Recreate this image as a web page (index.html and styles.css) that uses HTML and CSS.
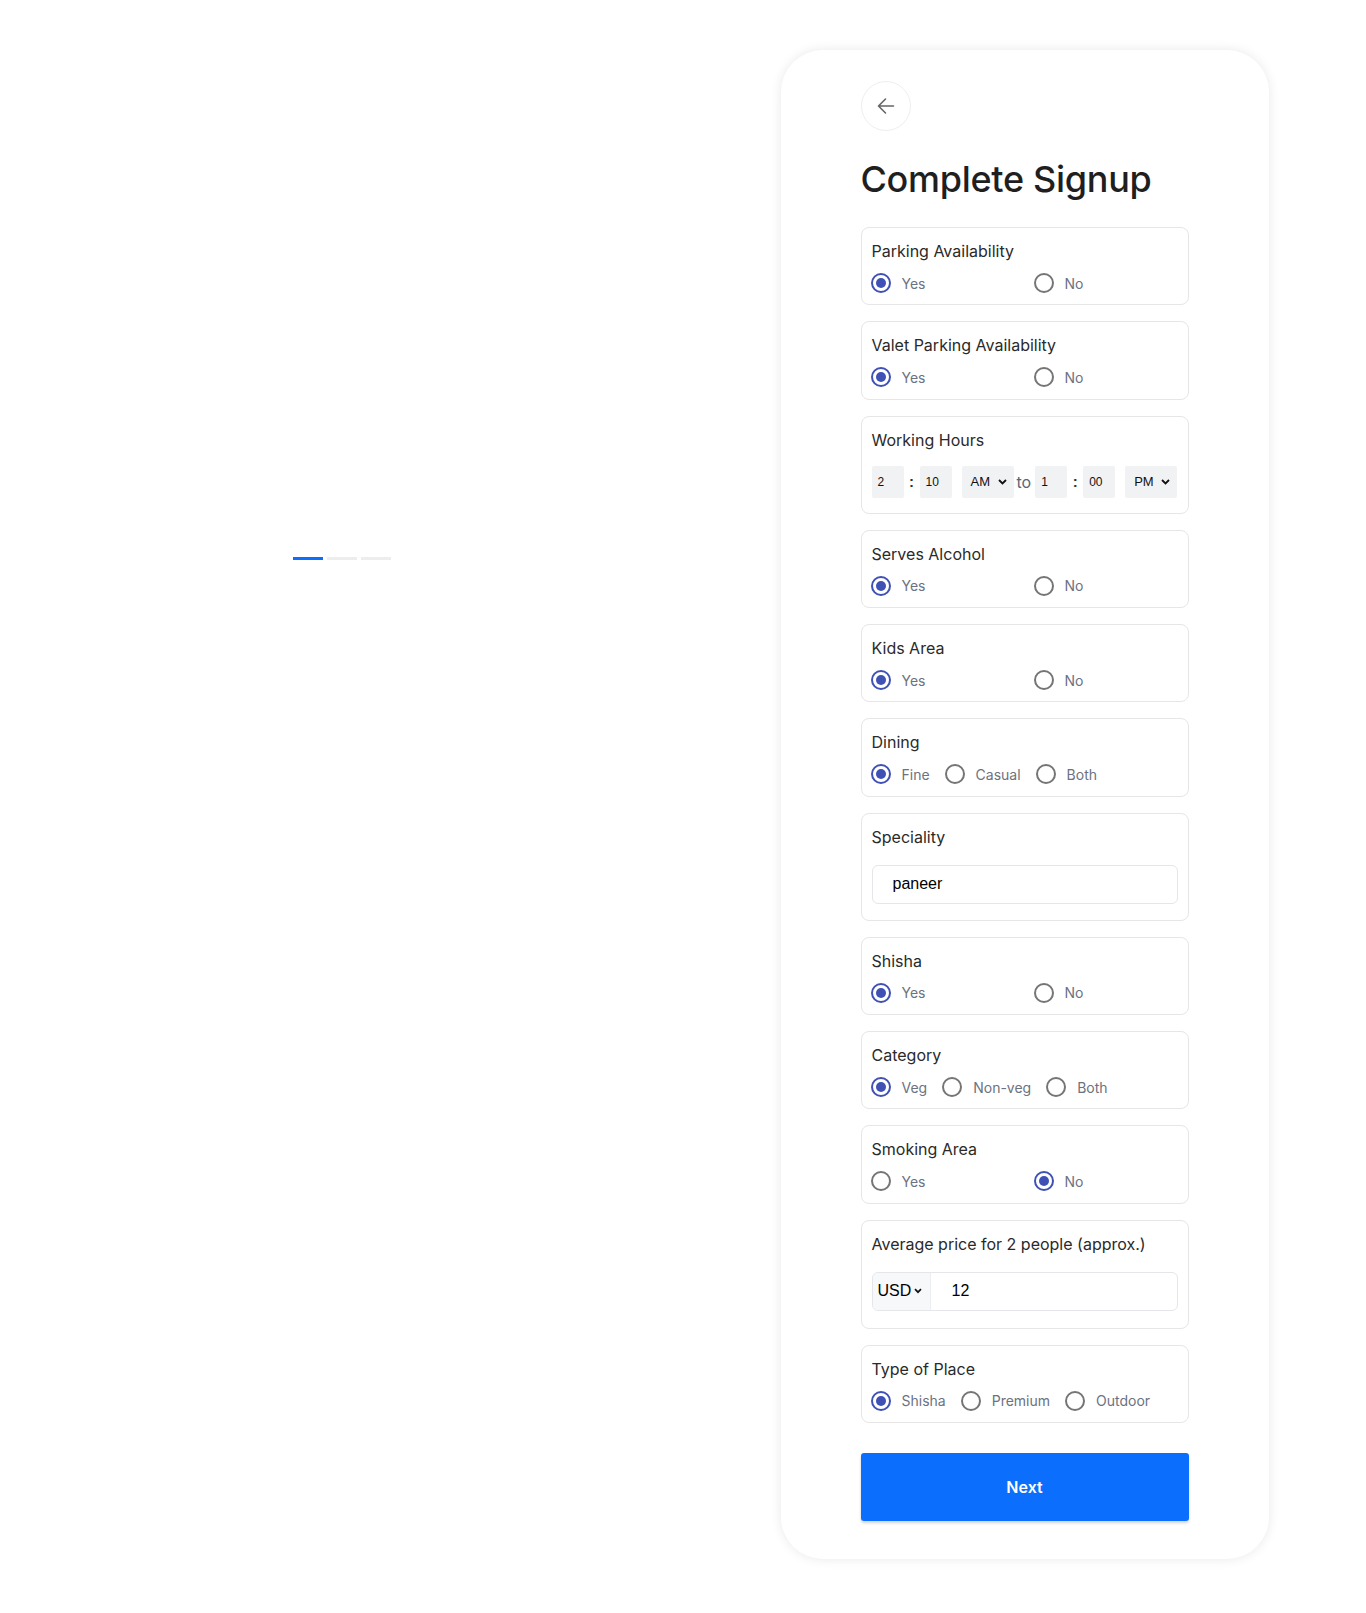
FILE: index.html
```html
<!DOCTYPE html>
<html lang="en">
<head>
<meta charset="utf-8">
<title>Complete Signup</title>
<link rel="stylesheet" href="styles.css">
</head>
<body>
<div class="page">
  <div class="left">
    <div class="indicators">
      <span class="ind active"></span><span class="ind"></span><span class="ind"></span>
    </div>
  </div>
  <div class="right">
    <div class="card">
      <button class="back" type="button" aria-label="Back">
        <svg width="20" height="20" viewBox="0 0 20 20" fill="none" stroke="#666" stroke-width="1.6" stroke-linecap="round" stroke-linejoin="round"><path d="M17.5 10H2.5M9.5 3 2.5 10l7 7"/></svg>
      </button>
      <h1 class="title">Complete Signup</h1>

      <div class="box">
        <div class="label">Parking Availability</div>
        <div class="opts two">
          <span class="opt"><span class="radio on"></span>Yes</span>
          <span class="opt"><span class="radio"></span>No</span>
        </div>
      </div>

      <div class="box">
        <div class="label">Valet Parking Availability</div>
        <div class="opts two">
          <span class="opt"><span class="radio on"></span>Yes</span>
          <span class="opt"><span class="radio"></span>No</span>
        </div>
      </div>

      <div class="box">
        <div class="label">Working Hours</div>
        <div class="hours">
          <span class="tin">2</span><span class="colon">:</span><span class="tin">10</span>
          <span class="tsel">AM<svg width="9" height="6" viewBox="0 0 9 6"><path d="M1 1l3.5 3.5L8 1" fill="none" stroke="#111" stroke-width="1.8"/></svg></span>
          <span class="to">to</span>
          <span class="tin">1</span><span class="colon">:</span><span class="tin">00</span>
          <span class="tsel">PM<svg width="9" height="6" viewBox="0 0 9 6"><path d="M1 1l3.5 3.5L8 1" fill="none" stroke="#111" stroke-width="1.8"/></svg></span>
        </div>
      </div>

      <div class="box">
        <div class="label">Serves Alcohol</div>
        <div class="opts two">
          <span class="opt"><span class="radio on"></span>Yes</span>
          <span class="opt"><span class="radio"></span>No</span>
        </div>
      </div>

      <div class="box">
        <div class="label">Kids Area</div>
        <div class="opts two">
          <span class="opt"><span class="radio on"></span>Yes</span>
          <span class="opt"><span class="radio"></span>No</span>
        </div>
      </div>

      <div class="box">
        <div class="label">Dining</div>
        <div class="opts">
          <span class="opt"><span class="radio on"></span>Fine</span>
          <span class="opt"><span class="radio"></span>Casual</span>
          <span class="opt"><span class="radio"></span>Both</span>
        </div>
      </div>

      <div class="box">
        <div class="label label-in">Speciality</div>
        <div class="field">paneer</div>
      </div>

      <div class="box">
        <div class="label">Shisha</div>
        <div class="opts two">
          <span class="opt"><span class="radio on"></span>Yes</span>
          <span class="opt"><span class="radio"></span>No</span>
        </div>
      </div>

      <div class="box">
        <div class="label">Category</div>
        <div class="opts">
          <span class="opt"><span class="radio on"></span>Veg</span>
          <span class="opt"><span class="radio"></span>Non-veg</span>
          <span class="opt"><span class="radio"></span>Both</span>
        </div>
      </div>

      <div class="box">
        <div class="label">Smoking Area</div>
        <div class="opts two">
          <span class="opt"><span class="radio"></span>Yes</span>
          <span class="opt"><span class="radio on"></span>No</span>
        </div>
      </div>

      <div class="box">
        <div class="label label-in">Average price for 2 people (approx.)</div>
        <div class="field group">
          <span class="cur">USD<svg width="8" height="6" viewBox="0 0 8 6"><path d="M1 1.2l3 3 3-3" fill="none" stroke="#111" stroke-width="1.7"/></svg></span>
          <span class="amt">12</span>
        </div>
      </div>

      <div class="box">
        <div class="label">Type of Place</div>
        <div class="opts">
          <span class="opt"><span class="radio on"></span>Shisha</span>
          <span class="opt"><span class="radio"></span>Premium</span>
          <span class="opt"><span class="radio"></span>Outdoor</span>
        </div>
      </div>

      <button class="next" type="button">Next</button>
    </div>
  </div>
</div>
</body>
</html>
```

FILE: styles.css
```css
* { box-sizing: border-box; }
html, body { margin: 0; padding: 0; background: #fff; }
body { font-family: Inter, "Noto Sans", sans-serif; color: #212529; }

.page { display: flex; width: 1366px; min-height: 1613px; }

.left { width: 683px; display: flex; justify-content: center; align-items: flex-start; padding-top: 557px; }
.indicators { display: flex; gap: 4px; height: 3px; }
.ind { display: block; width: 30px; height: 3px; background: #ededed; }
.ind.active { background: #0d6efd; }

.right { width: 683px; display: flex; justify-content: center; align-items: flex-start; padding-top: 50px; padding-bottom: 54px; }
.card {
  width: 488px;
  padding: 31px 80px 38px;
  border-radius: 42px;
  background: #fff;
  box-shadow: 0 0 12px rgba(0, 0, 0, 0.09);
}

.back {
  width: 50px; height: 50px; border-radius: 50%;
  border: 1.5px solid #eeeeee; background: #fff;
  display: flex; align-items: center; justify-content: center;
  padding: 0; margin: 0;
}

.title {
  margin: 27px 0 26px;
  font-size: 36px; line-height: 43px; font-weight: 500;
  letter-spacing: -0.3px;
  color: #1f1f1f;
}

.box {
  border: 1px solid #e6e6e6; border-radius: 8px;
  padding: 11px 10px 10.25px;
  margin-bottom: 16px;
}
.label { font-size: 16px; line-height: 24px; color: #2a2a2a; margin-bottom: 9px; }
.label-in { margin-bottom: 16px; }

.opts { display: flex; align-items: center; height: 22px; font-size: 14px; color: #6b7280; }
.opts.two { display: grid; grid-template-columns: 163px auto; }
.opt { display: flex; align-items: center; margin-right: 16px; }
.radio {
  width: 20px; height: 20px; border-radius: 50%;
  border: 2px solid #757575; margin-right: 11px; margin-left: -1px;
  display: inline-flex; align-items: center; justify-content: center;
}
.radio.on { border-color: #3f51b5; }
.radio.on::after { content: ""; width: 10px; height: 10px; border-radius: 50%; background: #3f51b5; }

.hours { display: flex; align-items: center; height: 42px; font-family: "Liberation Sans", Arial, sans-serif; font-size: 12px; color: #111; }
.tin { width: 32px; height: 32px; background: #f1f2f4; display: flex; align-items: center; padding-left: 6px; border-radius: 2px; }
.colon { width: 16px; text-align: center; font-size: 15px; font-weight: 700; color: #333; }
.tsel {
  width: 52px; height: 32px; background: #f1f2f4; border-radius: 2px;
  display: flex; align-items: center; justify-content: space-between;
  padding: 0 7px 0 9px; font-size: 13px; margin-left: 10px;
}
.to { font-family: Inter, sans-serif; font-size: 16px; color: #5b6675; margin: 0 4px 0 3px; }

.field {
  height: 39px; border: 1px solid #e4e6ea; border-radius: 6px;
  display: flex; align-items: center; padding-left: 20px;
  font-family: "Liberation Sans", Arial, sans-serif; font-size: 16px; color: #000;
  margin-bottom: 6px;
}
.field.group { padding-left: 0; overflow: hidden; margin-bottom: 7px; }
.cur {
  width: 58px; height: 100%; background: #f7f8fa; border-right: 1px solid #eceef1;
  display: flex; align-items: center; gap: 3px; padding-left: 5px;
}
.amt { padding-left: 21px; }

.next {
  display: block; width: 100%; height: 68px; margin-top: 30px;
  border: none; border-radius: 3px; background: #0b6efd; color: #fff;
  font-family: Inter, sans-serif; font-size: 16px; font-weight: 600;
  box-shadow: 0 2px 3px rgba(0, 0, 0, 0.18);
}
```
